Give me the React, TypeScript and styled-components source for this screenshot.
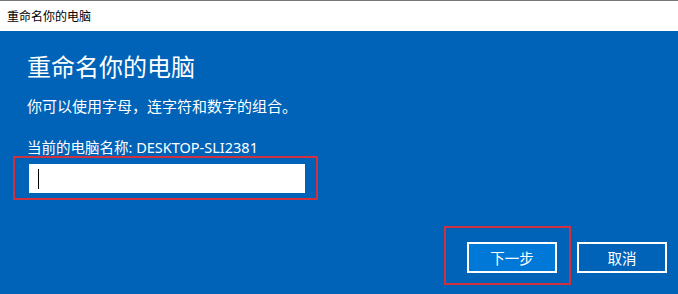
import styled, { createGlobalStyle } from 'styled-components';

const GlobalStyle = createGlobalStyle`
  html, body {
    margin: 0;
    padding: 0;
    width: 678px;
    height: 294px;
    overflow: hidden;
    background: #0063b8;
  }
  * {
    box-sizing: border-box;
  }
`;

const Window = styled.div`
  width: 678px;
  height: 294px;
  display: flex;
  flex-direction: column;
  font-family: "Noto Sans", "Noto Sans CJK SC", sans-serif;
  border-top: 1px solid #777777;
`;

const TitleBar = styled.div`
  height: 30px;
  flex: none;
  background: #ffffff;
  color: #000000;
  font-size: 12px;
  display: flex;
  align-items: center;
  padding-left: 7px;
`;

const Panel = styled.main`
  position: relative;
  flex: 1;
  background: #0063b8;
  color: #ffffff;
  display: flex;
  flex-direction: column;
  padding: 20px 11px 21px 27px;
`;

const Heading = styled.h1`
  margin: 0;
  font-size: 24px;
  font-weight: 400;
  line-height: 32px;
`;

const Hint = styled.p`
  margin: 13px 0 0;
  font-size: 15px;
  line-height: 20px;
`;

const Label = styled.div`
  margin-top: 21px;
  font-size: 14.5px;
  line-height: 20px;
`;

const Input = styled.div`
  margin-top: 7px;
  margin-left: 2px;
  width: 276px;
  height: 29px;
  background: #ffffff;
  display: flex;
  align-items: center;
  padding-left: 9px;
`;

const Caret = styled.span`
  width: 1px;
  height: 20px;
  background: #000000;
`;

const Actions = styled.div`
  margin-top: auto;
  display: flex;
  justify-content: flex-end;
  gap: 20px;
`;

const Button = styled.button<{ $primary?: boolean }>`
  width: 90px;
  height: 31px;
  border: 2px solid #ffffff;
  background: ${(p) => (p.$primary ? '#0078d7' : '#0063b8')};
  color: #ffffff;
  font-family: "Noto Sans CJK SC", sans-serif;
  font-size: 14.5px;
  padding: 0;
`;

const Highlight = styled.div<{ $x: number; $y: number; $w: number; $h: number }>`
  position: absolute;
  left: ${(p) => p.$x}px;
  top: ${(p) => p.$y}px;
  width: ${(p) => p.$w}px;
  height: ${(p) => p.$h}px;
  border: 2px solid #d1303f;
  pointer-events: none;
`;

export default function App() {
  return (
    <>
      <GlobalStyle />
      <Window>
        <TitleBar>重命名你的电脑</TitleBar>
        <Panel>
          <Heading>重命名你的电脑</Heading>
          <Hint>你可以使用字母，连字符和数字的组合。</Hint>
          <Label>当前的电脑名称: DESKTOP-SLI2381</Label>
          <Input>
            <Caret />
          </Input>
          <Actions>
            <Button $primary>下一步</Button>
            <Button>取消</Button>
          </Actions>
          <Highlight $x={13} $y={125} $w={305} $h={44} />
          <Highlight $x={444} $y={195} $w={127} $h={59} />
        </Panel>
      </Window>
    </>
  );
}
